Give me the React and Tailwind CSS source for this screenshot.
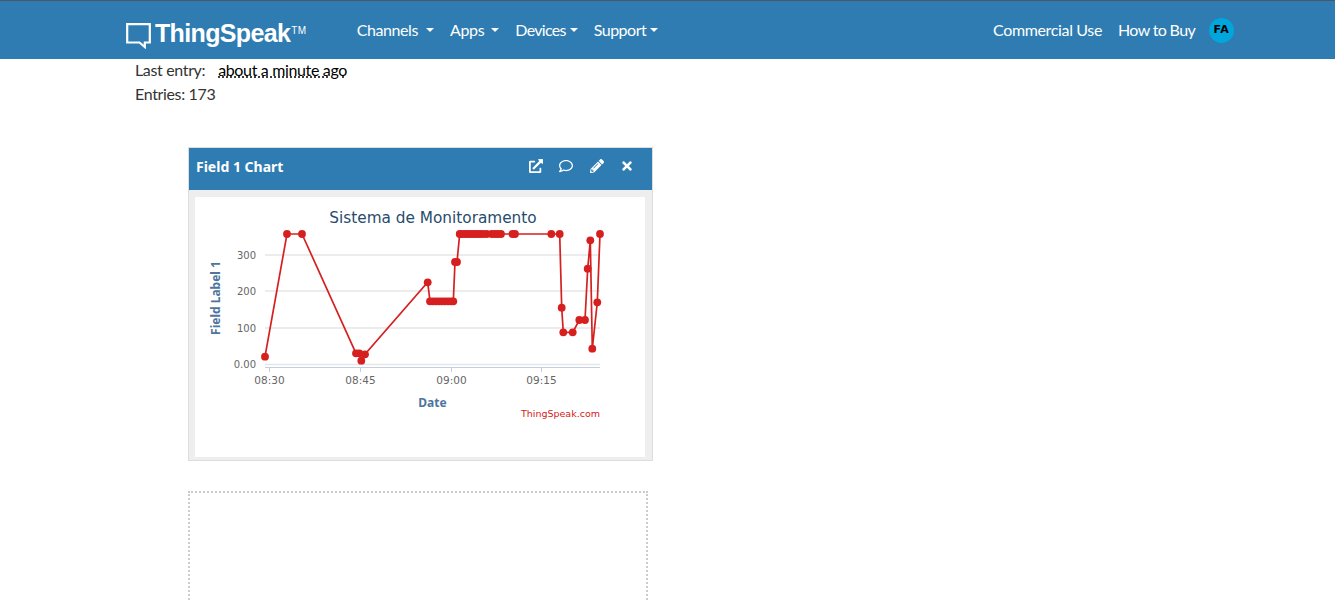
import { FaExternalLinkAlt, FaRegComment, FaPencilAlt, FaTimes } from 'react-icons/fa'

const points = [
  [265, 356.7], [287, 234], [302, 234], [356, 353.3], [359.3, 353.3], [361.3, 360.7], [365, 354.3],
  [427.7, 282.3], [430, 301.3], [433, 301.3], [436, 301.3], [439, 301.3], [442, 301.3], [445, 301.3],
  [448, 301.3], [451, 301.3], [453.3, 301.3], [455, 262], [457, 262], [459.7, 234], [462, 234], [465, 234],
  [468, 234], [471, 234], [474, 234], [477, 234], [480, 234], [483, 234], [486.7, 234], [491.7, 234],
  [495, 234], [498, 234], [501, 234], [512.5, 234], [515, 234], [551.3, 234], [559.7, 234], [561.7, 307.7],
  [563.3, 332.3], [572.7, 332.3], [579.3, 320], [585, 320], [587.7, 268.7], [590.3, 240.3], [592.3, 348.7],
  [597.3, 302.3], [600, 234],
]

const yTicks = [
  { label: '300', y: 255 },
  { label: '200', y: 291 },
  { label: '100', y: 328 },
  { label: '0.00', y: 364.5 },
]

const xTicks = [
  { label: '08:30', x: 269.5 },
  { label: '08:45', x: 360.5 },
  { label: '09:00', x: 451.5 },
  { label: '09:15', x: 541.5 },
]

function NavItem({ label, caretGap, tracking = '' }) {
  return (
    <a className={`flex items-center text-white ${tracking}`}>
      {label}
      <span className={`inline-block border-x-[4px] border-t-[4px] border-x-transparent border-t-white ${caretGap}`} />
    </a>
  )
}

// coordinates are page pixels, the viewBox starts at the top left corner of the white panel
function Chart() {
  return (
    <svg width="450" height="260" viewBox="195 197 450 260" className="block tracking-normal" style={{ fontFamily: '"DejaVu Sans", sans-serif' }}>
      <text x="433" y="223" textAnchor="middle" fontSize="15.3" fill="#274b6d">Sistema de Monitoramento</text>
      {yTicks.map(t => (
        <g key={t.label}>
          <line x1="265" x2="600" y1={t.y} y2={t.y} stroke="#e6e6e6" strokeWidth="1.3" />
          <text x="256" y={t.y + 3.5} textAnchor="end" fontSize="10" fill="#666">{t.label}</text>
        </g>
      ))}
      <line x1="265" x2="600" y1="367.5" y2="367.5" stroke="#c0d0e0" />
      {xTicks.map(t => (
        <g key={t.label}>
          <line x1={t.x} x2={t.x} y1="367" y2="372" stroke="#c0d0e0" />
          <text x={t.x} y="384" textAnchor="middle" fontSize="10.5" fill="#666">{t.label}</text>
        </g>
      ))}
      <text transform="translate(220 298) rotate(-90)" textAnchor="middle" fontSize="12" fontWeight="700" fill="#4d759e" style={{ fontFamily: '"Noto Sans", sans-serif' }}>Field Label 1</text>
      <text x="432.5" y="407" textAnchor="middle" fontSize="12" fontWeight="700" fill="#4d759e" style={{ fontFamily: '"Noto Sans", sans-serif' }}>Date</text>
      <text x="600" y="417" textAnchor="end" fontSize="9.5" fill="#d62020">ThingSpeak.com</text>
      <polyline points={points.map(p => p.join(',')).join(' ')} fill="none" stroke="#d62020" strokeWidth="1.7" />
      {points.map((p, i) => <circle key={i} cx={p[0]} cy={p[1]} r="3.9" fill="#d62020" />)}
    </svg>
  )
}

export default function App() {
  return (
    <div className="h-[601px] overflow-hidden bg-white text-[#333] text-[16px] tracking-[-0.35px]" style={{ fontFamily: 'Lato, sans-serif' }}>
      <header className="h-[59px] bg-[#2e7cb1] border-t border-t-[#4d5666] flex items-center pl-[126px] pr-[101px]">
        <svg width="25" height="26" viewBox="0 0 25 26" className="mt-[12px]">
          <path d="M1.2 1.2 H23.8 V19.5 H18.8 V24 L13.5 19.5 H1.2 Z" fill="none" stroke="#fff" strokeWidth="2.2" />
        </svg>
        <span className="ml-[4px] mt-[7px] text-white font-bold text-[25px] tracking-[-0.65px]" style={{ fontFamily: '"Liberation Sans", sans-serif' }}>ThingSpeak</span>
        <span className="ml-[1px] text-white text-[10px] tracking-[0.5px]" style={{ fontFamily: '"Liberation Sans", sans-serif' }}>TM</span>
        <nav className="ml-[50px] flex items-center gap-[16px]">
          <NavItem label="Channels" caretGap="ml-[8px]" tracking="tracking-[-0.4px]" />
          <NavItem label="Apps" caretGap="ml-[7px]" />
          <NavItem label="Devices" caretGap="ml-[4px]" tracking="tracking-[-0.7px]" />
          <NavItem label="Support" caretGap="ml-[4px]" tracking="tracking-[-0.5px]" />
        </nav>
        <div className="ml-auto flex items-center text-white">
          <a>Commercial Use</a>
          <a className="ml-[16px] tracking-[-0.65px]">How to Buy</a>
          <span className="ml-[14px] w-[25px] h-[25px] rounded-full bg-[#00a6dc] text-black text-[11px] font-bold tracking-[0.5px] pt-[1px] flex items-center justify-center" style={{ fontFamily: '"DejaVu Sans", sans-serif' }}>FA</span>
        </div>
      </header>

      <main className="pl-[135px]">
        <p className="leading-[24px] -mt-[1px]">
          Last entry:
          <span className="ml-[13px] underline decoration-dotted text-black">about a minute ago</span>
        </p>
        <p className="leading-[24px]">Entries: 173</p>

        <div className="ml-[53px] mt-[41px] w-[465px] border border-[#ddd] bg-[#eee]">
          <div className="h-[42px] bg-[#2e7cb1] flex items-center pl-[7px] pr-[18px] text-white">
            <span className="font-bold text-[14px] tracking-normal mb-[6px]" style={{ fontFamily: '"Noto Sans", sans-serif' }}>Field 1 Chart</span>
            <div className="ml-auto flex items-center gap-[16.5px] mb-[6px]">
              <FaExternalLinkAlt className="w-[14px] h-[14px]" />
              <FaRegComment className="w-[14px] h-[14px]" />
              <FaPencilAlt className="w-[14px] h-[14px]" />
              <FaTimes className="w-[14px] h-[14px]" />
            </div>
          </div>
          <div className="pt-[7px] pb-[3px] pl-[6px] pr-[7px]">
            <div className="bg-white">
              <Chart />
            </div>
          </div>
        </div>

        <div className="ml-[53px] mt-[30px] w-[460px] h-[300px] border-2 border-dotted border-[#ccc]" />
      </main>
    </div>
  )
}
